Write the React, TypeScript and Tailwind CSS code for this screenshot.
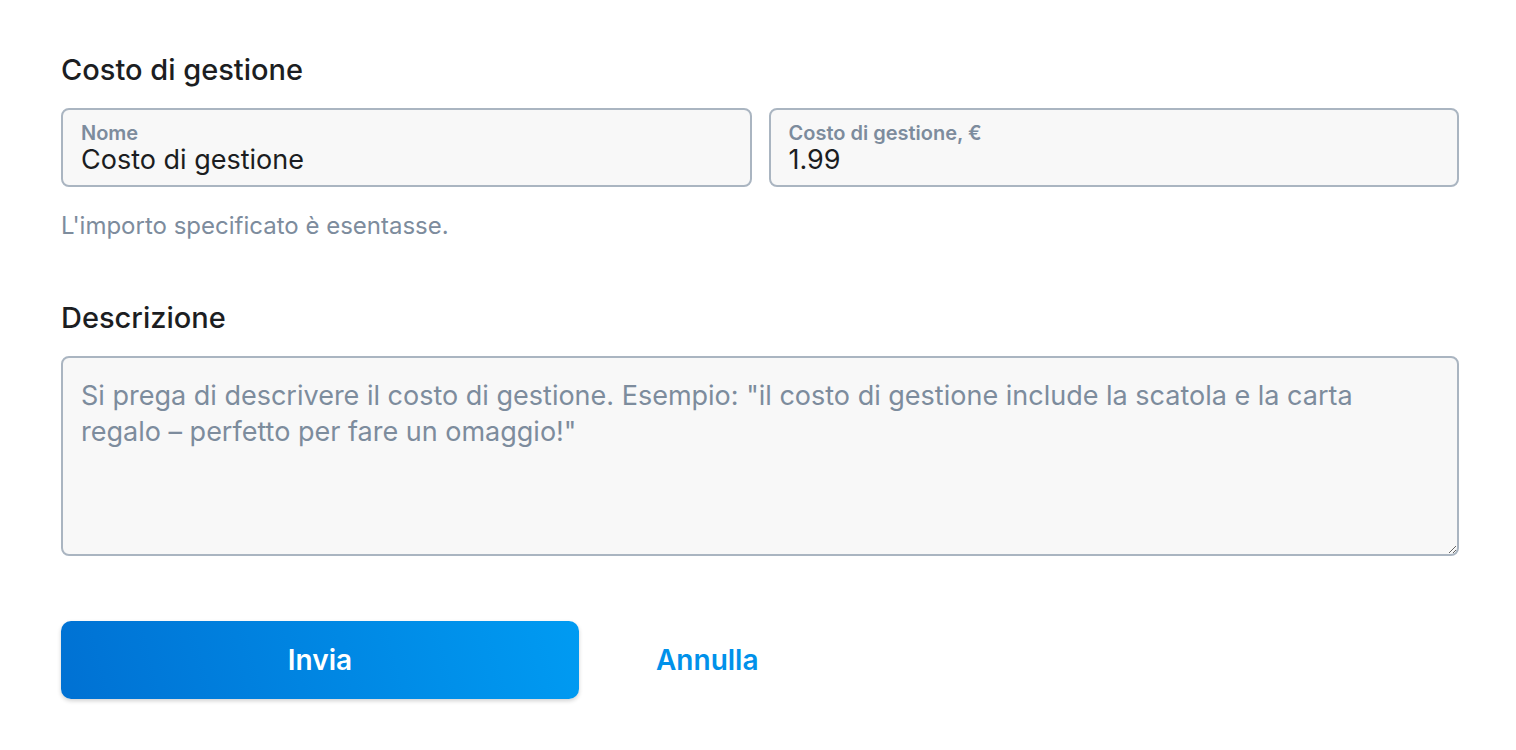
import React from "react";

const font = { fontFamily: "Inter, 'Noto Sans', sans-serif" };

const Field = ({ label, value }: { label: string; value: string }) => (
  <label className="flex-1 flex flex-col rounded-lg border-2 border-[#aab5c1] bg-[#f8f8f8] px-[18px] pt-[12px] pb-[9px]">
    <span className="text-[20px] leading-[22px] font-semibold text-[#7d8c9d]">{label}</span>
    <span className="text-[27px] leading-[32px] text-[#1b1d21]">{value}</span>
  </label>
);

export default function App() {
  return (
    <div className="min-h-screen bg-white" style={font}>
      <div className="px-[61px] pt-[54px] w-[1520px]">
        <h2 className="text-[29px] leading-[32px] font-medium text-[#1c1e22]">Costo di gestione</h2>
        <div className="flex gap-[17px] mt-[22px] w-[1398px]">
          <Field label="Nome" value="Costo di gestione" />
          <Field label="Costo di gestione, €" value="1.99" />
        </div>
        <p className="mt-[25px] text-[24px] leading-[28px] text-[#7d8c9d]">
          L'importo specificato è esentasse.
        </p>

        <h2 className="mt-[62px] text-[29px] leading-[32px] font-medium text-[#1c1e22]">Descrizione</h2>
        <textarea
          className="mt-[22px] block w-[1398px] h-[200px] rounded-lg border-2 border-[#aab5c1] bg-[#f8f8f8] px-[18px] pt-[20px] text-[27px] leading-[36px] text-[#1b1d21] placeholder:text-[#7d8c9d] outline-none"
          placeholder={'Si prega di descrivere il costo di gestione. Esempio: "il costo di gestione include la scatola e la carta regalo – perfetto per fare un omaggio!"'}
        />

        <div className="mt-[65px] flex items-center">
          <button className="w-[518px] h-[78px] rounded-[10px] bg-[linear-gradient(75deg,#0071d3,#009bf2)] text-white text-[28px] font-semibold shadow-[0_2px_4px_rgba(0,0,0,0.18)]">
            Invia
          </button>
          <button className="ml-[77px] text-[28px] font-semibold text-[#0091ea]">Annulla</button>
        </div>
      </div>
    </div>
  );
}
